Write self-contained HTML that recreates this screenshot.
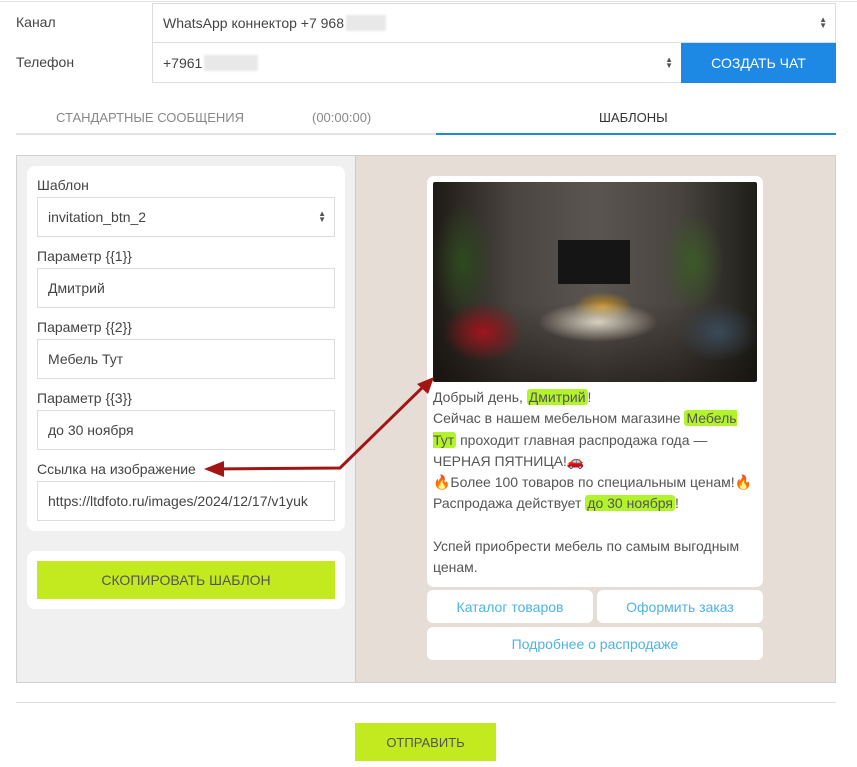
<!DOCTYPE html>
<html><head><meta charset="utf-8"><style>
*{box-sizing:border-box;margin:0;padding:0}
body{width:857px;height:767px;background:#fff;font-family:"Liberation Sans",sans-serif;font-size:14px;color:#444;position:relative;overflow:hidden}
.a{position:absolute}
.box{position:absolute;border:1px solid #ddd;background:#fff;padding-left:10px;display:flex;align-items:center;font-size:14px;color:#444}
.arr{position:absolute;right:8px;top:50%;transform:translateY(-50%);font-size:8px;line-height:6px;color:#555}
.lbl{position:absolute;font-size:14px;color:#444}
.blur{display:inline-block;background:#e8e8e8;width:56px;height:16px;margin-left:2px;filter:blur(1px)}
.hl{background:#b3f32b;border-radius:3px;padding:0 2px}
.wb{position:absolute;background:#fff;border-radius:6px;color:#4db3e8;font-size:14px;display:flex;align-items:center;justify-content:center}
</style></head><body>
<div class="a" style="left:0;top:1px;width:857px;height:1px;background:#e4e4e4"></div>
<div class="lbl" style="left:16px;top:14px">Канал</div>
<div class="box" style="left:152px;top:3px;width:684px;height:40px">WhatsApp коннектор +7 968 <span class="blur" style="width:40px"></span><span class="arr">▲<br>▼</span></div>
<div class="lbl" style="left:16px;top:54px">Телефон</div>
<div class="box" style="left:152px;top:42px;width:530px;height:41px">+7961<span class="blur" style="width:54px"></span><span class="arr">▲<br>▼</span></div>
<div class="a" style="left:681px;top:43px;width:155px;height:40px;background:#1e88e5;color:#fff;display:flex;align-items:center;justify-content:center;font-size:14px">СОЗДАТЬ ЧАТ</div>
<div class="lbl" style="left:56px;top:110px;color:#888;font-size:13px">СТАНДАРТНЫЕ СООБЩЕНИЯ</div>
<div class="lbl" style="left:312px;top:110px;color:#888;font-size:13px">(00:00:00)</div>
<div class="lbl" style="left:599px;top:110px;color:#333;font-size:13px">ШАБЛОНЫ</div>
<div class="a" style="left:16px;top:133px;width:420px;height:2px;background:#e4e4e4"></div>
<div class="a" style="left:436px;top:133px;width:400px;height:2px;background:#1e88e5"></div>

<div class="a" style="left:16px;top:155px;width:820px;height:528px;border:1px solid #d0d0d0;background:#f0f0f0"></div>
<div class="a" style="left:355px;top:156px;width:480px;height:526px;background:#e6ded6;border-left:1px solid #ccc"></div>

<div class="a" style="left:27px;top:166px;width:318px;height:365px;background:#fff;border-radius:8px"></div>
<div class="lbl" style="left:37px;top:177px">Шаблон</div>
<div class="box" style="left:37px;top:197px;width:298px;height:40px">invitation_btn_2<span class="arr">▲<br>▼</span></div>
<div class="lbl" style="left:37px;top:248px">Параметр {{1}}</div>
<div class="box" style="left:37px;top:268px;width:298px;height:40px">Дмитрий</div>
<div class="lbl" style="left:37px;top:319px">Параметр {{2}}</div>
<div class="box" style="left:37px;top:339px;width:298px;height:40px">Мебель Тут</div>
<div class="lbl" style="left:37px;top:390px">Параметр {{3}}</div>
<div class="box" style="left:37px;top:410px;width:298px;height:40px">до 30 ноября</div>
<div class="lbl" style="left:37px;top:461px">Ссылка на изображение</div>
<div class="box" style="left:37px;top:481px;width:298px;height:40px;white-space:nowrap;overflow:hidden">https://ltdfoto.ru/images/2024/12/17/v1yuk</div>

<div class="a" style="left:27px;top:551px;width:318px;height:58px;background:#fff;border-radius:8px"></div>
<div class="a" style="left:37px;top:561px;width:298px;height:38px;background:#c3ea1e;color:#555;display:flex;align-items:center;justify-content:center">СКОПИРОВАТЬ ШАБЛОН</div>

<div class="a" style="left:427px;top:176px;width:336px;height:411px;background:#fff;border-radius:7px"></div>
<div class="a" style="left:433px;top:182px;width:324px;height:200px;background:
radial-gradient(ellipse 40px 30px at 50px 150px,#a0141c,transparent),
radial-gradient(ellipse 60px 20px at 165px 140px,#d8d0c0,transparent),
radial-gradient(ellipse 30px 15px at 170px 125px,#c89020,transparent),
radial-gradient(ellipse 40px 30px at 285px 150px,#3a4a5a,transparent),
radial-gradient(ellipse 30px 50px at 260px 80px,#3c5a28,transparent),
radial-gradient(ellipse 30px 60px at 30px 80px,#2e4a20,transparent),
linear-gradient(180deg,rgba(0,0,0,0) 60%,rgba(20,15,10,.6)),
linear-gradient(90deg,#1e1a16,#4a4540 25%,#5a5550 50%,#4a4540 75%,#1e1e18);border-radius:2px"></div>
<div class="a" style="left:558px;top:240px;width:72px;height:44px;background:#151515"></div>
<div class="a" style="left:433px;top:387px;width:325px;font-size:14px;line-height:21.3px;color:#555">Добрый день, <span class="hl">Дмитрий</span>!<br>Сейчас в нашем мебельном магазине <span class="hl">Мебель Тут</span> проходит главная распродажа года — ЧЕРНАЯ ПЯТНИЦА!🚗<br>🔥Более 100 товаров по специальным ценам!🔥<br>Распродажа действует <span class="hl">до 30 ноября</span>!<br><br>Успей приобрести мебель по самым выгодным ценам.</div>
<div class="wb" style="left:427px;top:590px;width:166px;height:33px">Каталог товаров</div>
<div class="wb" style="left:597px;top:590px;width:166px;height:33px">Оформить заказ</div>
<div class="wb" style="left:427px;top:627px;width:336px;height:33px">Подробнее о распродаже</div>

<svg class="a" style="left:0;top:0" width="857" height="767"><polyline points="212,469 340,468 428,382" fill="none" stroke="#a31515" stroke-width="3"/><polygon points="204,469 224,461 224,477" fill="#a31515"/><polygon points="434,377 417,384 428,394" fill="#a31515"/></svg>

<div class="a" style="left:16px;top:702px;width:820px;height:1px;background:#ddd"></div>
<div class="a" style="left:355px;top:723px;width:141px;height:38px;background:#c3ea1e;color:#555;display:flex;align-items:center;justify-content:center;font-size:13px">ОТПРАВИТЬ</div>
</body></html>
